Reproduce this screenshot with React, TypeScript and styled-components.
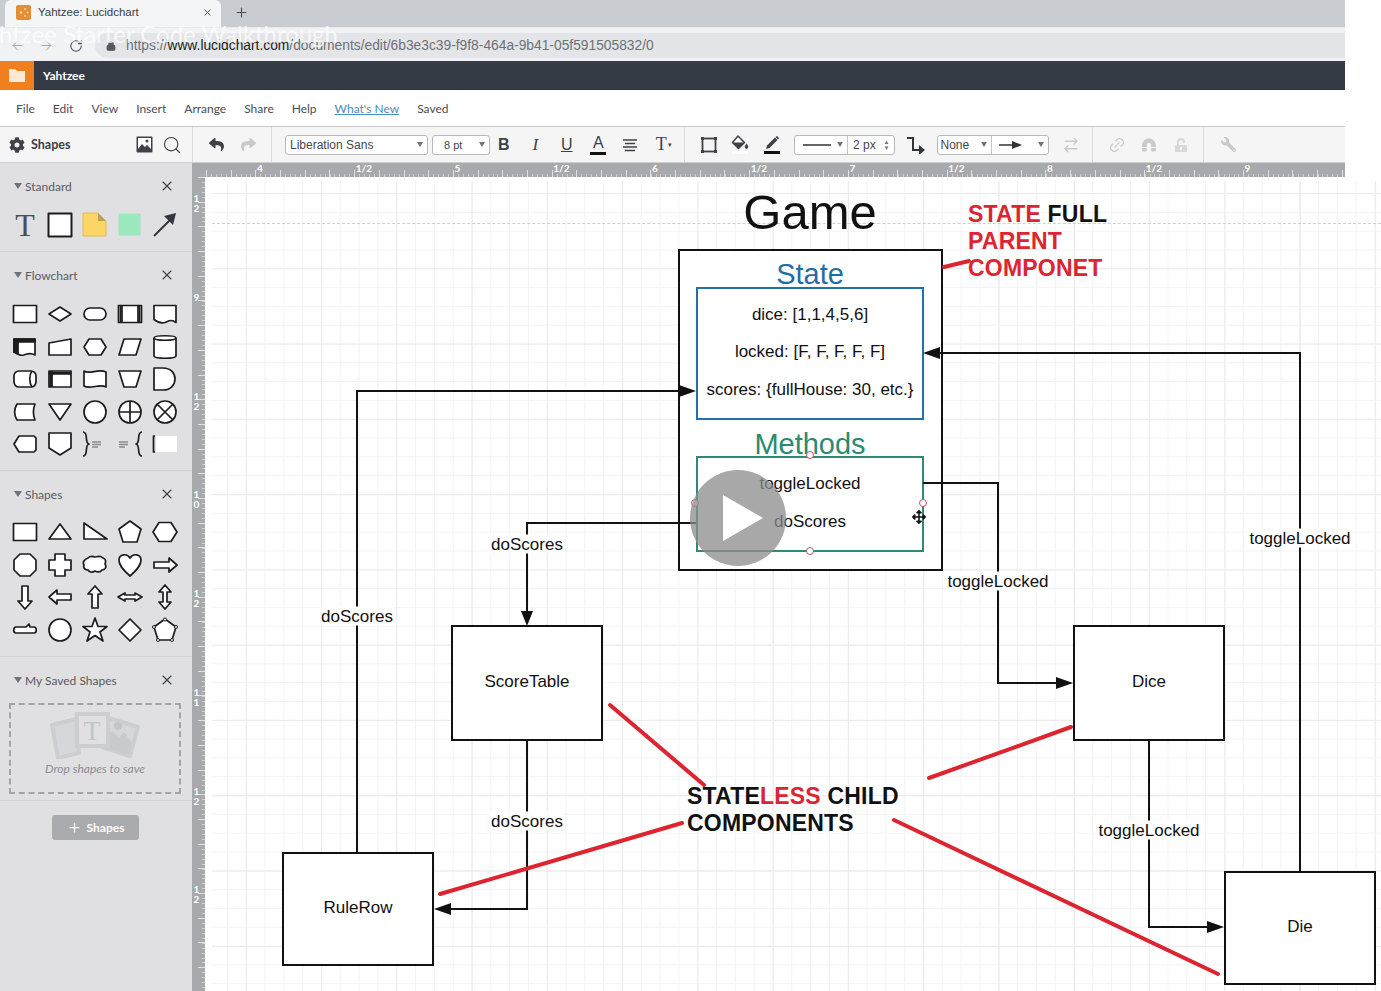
import React from "react";
import styled, { createGlobalStyle } from "styled-components";
import { FaCog, FaReply, FaShare, FaMagnet, FaUnlockAlt, FaWrench, FaArrowsAlt } from "react-icons/fa";
import { Search, Link2, ArrowRightLeft, RotateCw, ArrowLeft, ArrowRight, Lock, X, Plus } from "lucide-react";

const Global = createGlobalStyle`
  html, body { margin: 0; padding: 0; background: #fff; }
  body { font-family: Lato, "Noto Sans", "Liberation Sans", sans-serif; }
  * { box-sizing: border-box; }
`;

const Page = styled.div`
  position: relative; width: 1381px; height: 991px; overflow: hidden; background: #fff;
  display: flex; flex-direction: column;
`;
const Chrome = styled.header`width: 1345px; flex: none; display: flex; flex-direction: column;`;
const TabStrip = styled.div`height: 27px; background: #c9ccd0; display: flex; align-items: flex-start; padding-left: 5px;`;
const Tab = styled.div`
  width: 216px; height: 27px; background: #f4f5f6; border-radius: 6px 6px 0 0;
  display: flex; align-items: center; padding: 0 8px 3px 11px; color: #3a3d42; font-size: 11.5px;
`;
const Favicon = styled.svg`width: 15px; height: 15px; margin-right: 7px; flex: none; display: block;`;
const TabTitle = styled.span`flex: 1; font-family: "Liberation Sans", sans-serif;`;
const NewTab = styled.span`color: #4b4e52; margin: 5px 0 0 13px; display: flex;`;
const AddressRow = styled.div`
  height: 34px; background: #f1f2f3; display: flex; align-items: center; padding: 5px 0 3px 3px; border-top: 1px solid #e8e9eb; color: #8f9296;
`;
const NavIcon = styled.span<{ $dark?: boolean }>`width: 29px; display: flex; justify-content: center; color: ${p => (p.$dark ? "#55585c" : "#a6a9ac")};`;
const UrlPill = styled.div`
  flex: 1; height: 25px; margin-left: 5px; background: #e3e5e8; border-radius: 13px 0 0 13px;
  display: flex; align-items: center; padding-left: 11px; font: 13.8px "Liberation Sans", sans-serif; color: #6e7276;
`;
const UrlHost = styled.span`color: #222;`;
const LockWrap = styled.span`display: flex; margin-right: 10px; color: #55585c;`;
const BrandBar = styled.div`height: 29px; background: #353b45; display: flex; align-items: center; color: #fff; font-size: 12px; font-weight: 700; border-bottom: 1px solid #2c3038;`;
const FolderBox = styled.div`width: 34px; height: 29px; background: #f0801f; display: flex; align-items: center; justify-content: center; margin-right: 9px;`;
const MenuBar = styled.nav`height: 37px; background: #fff; display: flex; align-items: center; padding-left: 16px; gap: 18px; font-size: 12px; color: #4a4d52; border-bottom: 1px solid #c9c9c9;`;
const NewsLink = styled.a`color: #4a8cb9; text-decoration: underline;`;
const Toolbar = styled.div`height: 36px; background: #f5f5f6; display: flex; align-items: center; border-bottom: 1px solid #cfcfcf; color: #3e4248;`;
const ToolSection = styled.div<{ $w: number; $pad?: number }>`
  width: ${p => p.$w}px; height: 100%; flex: none; display: flex; align-items: center; border-right: 1px solid #dcdcdc; padding-left: ${p => p.$pad ?? 0}px;
`;
const ShapesTitle = styled.strong`font-size: 12.5px; font-weight: 700; margin-left: 6px; flex: 1; color: #3c4046;`;
const ToolBtn = styled.span<{ $w?: number; $muted?: boolean; $serif?: boolean; $ml?: number }>`
  width: ${p => p.$w ?? 31.5}px; flex: none; display: flex; flex-direction: column; align-items: center; justify-content: center; margin-left: ${p => p.$ml ?? 0}px;
  color: ${p => (p.$muted ? "#c9cacc" : "#3e4248")}; font: ${p => (p.$serif ? "17px" : "16px")} ${p => (p.$serif ? '"Liberation Serif", serif' : '"Liberation Sans", sans-serif')};
`;
const ColorBar = styled.i<{ $c: string }>`display: block; width: 16px; height: 3px; margin-top: 1px; background: ${p => p.$c};`;
const SelectBox = styled.div<{ $w: number; $ml?: number }>`
  width: ${p => p.$w}px; height: 20px; margin-left: ${p => p.$ml ?? 0}px; flex: none; background: #fff; border: 1px solid #b9b9bb; border-radius: 3px;
  display: flex; align-items: center; justify-content: space-between; padding: 0 4px; font: 12px "Liberation Sans", sans-serif; color: #45484d;
`;
const SelectSplit = styled.span<{ $w: number; $rule?: boolean }>`
  width: ${p => p.$w}px; height: 100%; display: flex; align-items: center; justify-content: space-between; padding-right: 4px; padding-left: 3px;
  border-right: ${p => (p.$rule ? "1px solid #c4c4c6" : "none")};
`;
const Caret = styled.i`width: 0; height: 0; border: 3.5px solid transparent; border-top: 5px solid #70737a; border-bottom: 0; display: block;`;
const Stepper = styled.i`font-size: 6px; line-height: 6px; font-style: normal; color: #70737a; text-align: center;`;

const Workspace = styled.div`flex: 1; display: flex; min-height: 0;`;
const Sidebar = styled.aside`width: 192px; flex: none; background: #e0e0e3; display: flex; flex-direction: column; color: #55585e;`;
const Panel = styled.section<{ $h: number }>`height: ${p => p.$h}px; flex: none; border-bottom: 1px solid #d2d2d5; padding-top: 12px;`;
const PanelHead = styled.div`display: flex; align-items: center; height: 22px; padding: 0 17px 0 14px; font-size: 12px; color: #585b61;`;
const PanelName = styled.span`flex: 1; margin-left: 3px;`;
const ShapeGrid = styled.div<{ $top: number; $row: number }>`
  display: grid; grid-template-columns: repeat(5, 35px); grid-auto-rows: ${p => p.$row}px; padding: ${p => p.$top}px 0 0 7.5px; justify-items: center; align-items: center;
`;
const ShapeIcon = styled.svg`
  width: 26px; height: 26px; display: block; fill: #fff; stroke: #1c1c1c; stroke-width: 1.7; stroke-linejoin: round;
`;
const SavedDrop = styled.div`
  margin: 12px 11px 0 9px; height: 91px; border: 2px dashed #a3a4a8; display: flex; flex-direction: column; align-items: center; padding-top: 6px;
`;
const DropText = styled.em`font-size: 12px; color: #8b8d92; margin-top: 2px;`;
const AddRow = styled.div`display: flex; justify-content: center; padding: 14px 0 0 0; margin-left: -1px;`;
const AddBtn = styled.button`
  width: 87px; height: 25px; background: #a9abaf; color: #fff; border: 0; border-radius: 3px; font: 700 12px Lato, sans-serif;
  display: flex; align-items: center; justify-content: center; gap: 5px;
`;

const Main = styled.div`flex: 1; display: flex; flex-direction: column; min-width: 0;`;
const rulerBase = `
  background-color: #a7a9ad; color: #fff; font: 700 10px Lato, sans-serif;
`;
const TopRuler = styled.div`
  ${rulerBase}
  height: 14px; width: 1153px; flex: none; display: flex; padding-left: 65px; overflow: hidden;
  background-image:
    repeating-linear-gradient(90deg, #dfe0e2 0 1px, transparent 1px 24.69px),
    repeating-linear-gradient(90deg, #cfd0d3 0 1px, transparent 1px 4.94px);
  background-size: 100% 7px, 100% 3px;
  background-position: 14px 100%, 14px 100%;
  background-repeat: no-repeat;
`;
const TopMark = styled.span`width: 98.75px; flex: none; line-height: 10px;`;
const BodyRow = styled.div`flex: 1; display: flex; min-height: 0;`;
const LeftRuler = styled.div`
  ${rulerBase}
  width: 13px; flex: none; display: flex; flex-direction: column; padding-top: 16px; overflow: hidden; align-items: flex-start; padding-left: 1px;
  background-image:
    repeating-linear-gradient(180deg, #dfe0e2 0 1px, transparent 1px 24.69px),
    repeating-linear-gradient(180deg, #cfd0d3 0 1px, transparent 1px 4.94px);
  background-size: 7px 100%, 3px 100%;
  background-position: 100% 0, 100% 0;
  background-repeat: no-repeat;
`;
const LeftMark = styled.span`height: 98.75px; flex: none; width: 7px; line-height: 10px; text-align: center; display: flex; flex-direction: column;`;
const Canvas = styled.main`
  position: relative; flex: 1; background-color: #fff; padding: 4px 0 0 7px; background-clip: content-box; background-origin: content-box;
  background-image:
    linear-gradient(#ebebeb 1px, transparent 1px),
    linear-gradient(90deg, #ebebeb 1px, transparent 1px),
    linear-gradient(#f3f3f3 1px, transparent 1px),
    linear-gradient(90deg, #f3f3f3 1px, transparent 1px);
  background-size: 75.3px 75.3px, 75.3px 75.3px, 18.82px 18.82px, 18.82px 18.82px;
  background-position: 0 12px, 33.7px 0, 0 12px, 14.9px 0;
  font: 17px "Liberation Sans", sans-serif; color: #111;
`;
const PageGuide = styled.div`position: absolute; left: 7px; right: 0; top: 46px; border-top: 1px dashed #cfcfcf;`;
const Wires = styled.svg`position: absolute; left: 0; top: 0; width: 1176px; height: 814px; pointer-events: none;`;
const NodeBox = styled.div<{ $x: number; $y: number; $w: number; $h: number; $c?: string }>`
  position: absolute; left: ${p => p.$x - 205}px; top: ${p => p.$y - 177}px; width: ${p => p.$w}px; height: ${p => p.$h}px;
  border: 2px solid ${p => p.$c ?? "#111"}; background: #fff; display: flex; align-items: center; justify-content: center; padding: 0 0 3px 0;
`;
const CanvasText = styled.div<{ $cx: number; $y: number; $size?: number; $c?: string }>`
  position: absolute; left: ${p => p.$cx - 205 - 150}px; top: ${p => p.$y - 177 - 30}px; width: 300px; height: 60px;
  display: flex; align-items: center; justify-content: center; font-size: ${p => p.$size ?? 17}px; color: ${p => p.$c ?? "#111"};
`;
const EdgeLabel = styled.span<{ $cx: number; $y: number }>`
  position: absolute; left: ${p => p.$cx - 205}px; top: ${p => p.$y - 177}px; transform: translate(-50%, -50%); background: #fff; padding: 0 1px; line-height: 19px; white-space: nowrap;
`;
const Note = styled.div<{ $x: number; $y: number }>`
  position: absolute; left: ${p => p.$x - 205}px; top: ${p => p.$y - 177}px; font-size: 23px; font-weight: 700; line-height: 27px; color: #111; white-space: nowrap; letter-spacing: 0.2px;
`;
const Red = styled.span`color: #dc2530;`;
const Handle = styled.i<{ $x: number; $y: number }>`
  position: absolute; left: ${p => p.$x - 205 - 4}px; top: ${p => p.$y - 177 - 4}px; width: 8px; height: 8px; border-radius: 50%; background: #fff; border: 1px solid #b4566c;
`;
const PlayCircle = styled.div`
  position: absolute; left: ${690 - 205}px; top: ${470 - 177}px; width: 96px; height: 96px; border-radius: 50%; background: rgba(140, 140, 140, 0.76);
  display: flex; align-items: center; justify-content: center;
`;
const MoveCursor = styled.span`position: absolute; left: ${912 - 205}px; top: ${510 - 177}px; display: flex; color: #111;`;
const GhostTitle = styled.div`
  position: absolute; left: -1px; top: 19px; font: 400 24px Lato, sans-serif; color: rgba(255, 255, 255, 0.72); white-space: nowrap; pointer-events: none;
`;

const S = (c: React.ReactNode, k: string) => <ShapeIcon key={k} viewBox="0 0 26 26">{c}</ShapeIcon>;
const flowchart: React.ReactNode[] = [
  <rect x="1.5" y="4.5" width="23" height="17" />,
  <path d="M2 13 13 6l11 7-11 7z" />,
  <rect x="2" y="7" width="22" height="12" rx="6" />,
  <><rect x="1.5" y="4.5" width="23" height="17" /><path d="M3.500 4.500v17M22.500 4.500v17" /><path d="M5 4.500v17M21 4.500v17" /></>,
  <path d="M2 4.5h22v17c-5-4-8-1-11 0s-7 0-11-3z" />,
  <><path d="M2 5h21v16c-5-3-8-1-11 0s-7-1-10-3z" /><path d="M2 5h21v3H6v11l-4-1z" fill="#1c1c1c" /></>,
  <path d="M2 9 24 5v16H2z" />,
  <path d="M7 5h12l5 8-5 8H7l-5-8z" />,
  <path d="M7 5h17l-5 16H2z" />,
  <><path d="M2 4c0-3 22-3 22 0v18c0 3-22 3-22 0z" /><path d="M2 4c0 3 22 3 22 0" /></>,
  <><rect x="2" y="5" width="22" height="16" rx="5" /><path d="M20 5c-3 4-3 12 0 16" /></>,
  <><rect x="2" y="5" width="22" height="16" /><path d="M2 8h22M2 6.500h22M5 5v16M3.500 5v16" /></>,
  <path d="M2 5c6 4 14-3 22 1v15c-7-4-15 3-22-1z" />,
  <path d="M2 5h22l-5 16H7z" />,
  <path d="M2 2h9c16 0 16 22 0 22H2z" />,
  <path d="M4 5h18c-2 5-2 11 0 16H4c-3-5-3-11 0-16z" transform="translate(1 0)" />,
  <path d="M2 5h22L13 21z" />,
  <circle cx="13" cy="13" r="11" />,
  <><circle cx="13" cy="13" r="11" /><path d="M13 2v22M2 13h22" /></>,
  <><circle cx="13" cy="13" r="11" /><path d="M5 5l16 16M21 5 5 21" /></>,
  <path d="M7 5h15l2 2v12l-2 2H7l-5-8z" />,
  <path d="M2 2h22v15l-11 7L2 17z" />,
  <g fill="none"><path d="M1 1c6 0 1 11 6 12-5 1 0 12-6 12" /><path d="M10 11h9M10 13.500h9M10 16h6" stroke="#8a8a8a" /></g>,
  <g fill="none"><path d="M25 1c-6 0-1 11-6 12 5 1 0 12 6 12" /><path d="M2 11h9M2 13.500h9M2 16h6" stroke="#8a8a8a" /></g>,
  <><path d="M3 5H1.500v16H3" fill="none" /><rect x="4" y="5" width="21" height="16" fill="#fff" stroke="none" /></>,
];
const basics: React.ReactNode[] = [
  <rect x="1.500" y="4.500" width="23" height="17" />,
  <path d="M13 5l11 15H2z" />,
  <path d="M2 4v16h23z" />,
  <path d="M13 2l11 8-4 13H6L2 10z" />,
  <path d="M7 3.500h12l6 9.500-6 9.500H7L1 13z" />,
  <path d="M8 2h10l6 6v10l-6 6H8l-6-6V8z" />,
  <path d="M8 2h10v6h6v10h-6v6H8v-6H2V8h6z" />,
  <path d="M6 6c3-3 5-1 7-1s5-2 8 1c3 1 3 4 2 6 2 3 0 6-3 6-2 3-5 2-7 1-3 2-6 1-7-1-3 0-5-2-4-5-2-3 1-6 4-7z" />,
  <path d="M13 24C5 17 2 13 2 8c0-6 8-7 11-2 3-5 11-4 11 2 0 5-3 9-11 16z" />,
  <path d="M2 10h15V6l8 7-8 7v-4H2z" />,
  <path d="M10 2h6v15h4l-7 8-7-8h4z" />,
  <path d="M24 10H10V6l-8 7 8 7v-4h14z" />,
  <path d="M10 24V10H6l7-8 7 8h-4v14z" />,
  <path d="M8 9v2h10V9l7 4-7 4v-2H8v2l-7-4z" />,
  <path d="M11 8H7l6-7 6 7h-4v10h4l-6 7-6-7h4z" />,
  <path d="M4 10h10l3-3 1 3h4c3 0 3 6 0 6H4c-3 0-3-6 0-6z" />,
  <circle cx="13" cy="13" r="11" />,
  <path d="M13 1l3 8.500h9L18 15l3 9-8-5.500L5 24l3-9-7-5.500h9z" />,
  <path d="M13 2l11 11-11 11L2 13z" />,
  <><path d="M13 2l11 8-4 13H6L2 10z" /><g strokeWidth="1"><circle cx="13" cy="2.500" r="1.500" /><circle cx="24" cy="10" r="1.500" /><circle cx="20" cy="23" r="1.500" /><circle cx="6" cy="23" r="1.500" /><circle cx="2" cy="10" r="1.500" /></g></>,
];

const TriangleMark = () => <svg width="8" height="8" viewBox="0 0 8 8"><path d="M0 1h8L4 7z" fill="#6f7278" /></svg>;
const Close = () => <X size={16} strokeWidth={1.6} color="#3d4046" />;
const Head = ({ name }: { name: string }) => (
  <PanelHead><TriangleMark /><PanelName>{name}</PanelName><Close /></PanelHead>
);

const StandardIcons = () => (
  <>
    <ToolBtn $serif style={{ fontSize: 32, color: "#4a4d55", lineHeight: "30px" }}>T</ToolBtn>
    <ShapeIcon viewBox="0 0 26 26" style={{ strokeWidth: 2 }}><rect x="1.500" y="1.500" width="23" height="23" /></ShapeIcon>
    <ShapeIcon viewBox="0 0 26 26" style={{ fill: "#fbd665", stroke: "#e3bb58", strokeWidth: 1 }}><path d="M1 1h15l8 8v15H1z" /><path d="M16 1v8h8z" fill="#b8a15e" stroke="none" /></ShapeIcon>
    <ShapeIcon viewBox="0 0 26 26" style={{ stroke: "none", fill: "#9be8bd" }}><rect x="1.500" y="1.500" width="22" height="22" /></ShapeIcon>
    <ShapeIcon viewBox="0 0 26 26" style={{ stroke: "#33363d", strokeWidth: 2 }}><path d="M2 24 19 7" /><path d="M24 1l-3 12-9-9z" fill="#33363d" stroke="none" /></ShapeIcon>
  </>
);

const SavedArt = () => (
  <svg width="92" height="48" viewBox="0 0 92 48" style={{ display: "block" }}>
    <g fill="none" stroke="#ccced1" strokeWidth="4" strokeLinejoin="round">
      <path d="M3 14l24-6 3 34-21 5z" fill="#d6d7da" />
      <path d="M60 7l29 9-8 29-28-9z" fill="#d6d7da" />
    </g>
    <path d="M51 36l12-16 7 6 5-5 8 11-3 12z" fill="#c9cacd" />
    <circle cx="69" cy="15" r="4" fill="#c4c5c8" />
    <rect x="28" y="3" width="31" height="32" fill="#e0e0e3" stroke="#ccced1" strokeWidth="4" />
    <text x="43" y="29" textAnchor="middle" fontFamily="Liberation Serif, serif" fontSize="28" fill="#c4c5c9">T</text>
  </svg>
);

const H = 177;
const arrow = (x: number, y: number, d: "r" | "l" | "d") => {
  const p = d === "r" ? `${x},${y} ${x - 17},${y - 6} ${x - 17},${y + 6}` : d === "l" ? `${x},${y} ${x + 17},${y - 6} ${x + 17},${y + 6}` : `${x},${y} ${x - 6},${y - 15} ${x + 6},${y - 15}`;
  return <polygon points={p} fill="#111" />;
};

export default function App() {
  return (
    <Page>
      <Global />
      <Chrome>
        <TabStrip>
          <Tab>
            <Favicon viewBox="0 0 15 15">
              <rect width="15" height="15" rx="2" fill="#e58d35" />
              <g fill="#f7d9a8"><circle cx="5" cy="7.500" r="1.300" /><circle cx="9" cy="4" r="1" /><circle cx="9" cy="11" r="1" /><circle cx="11.500" cy="7.500" r="1" /></g>
            </Favicon>
            <TabTitle>Yahtzee: Lucidchart</TabTitle>
            <X size={11} strokeWidth={2} color="#44474b" />
          </Tab>
          <NewTab><Plus size={15} strokeWidth={1.8} /></NewTab>
        </TabStrip>
        <AddressRow>
          <NavIcon><ArrowLeft size={15} strokeWidth={1.6} /></NavIcon>
          <NavIcon><ArrowRight size={15} strokeWidth={1.6} /></NavIcon>
          <NavIcon $dark><RotateCw size={14} strokeWidth={2} /></NavIcon>
          <UrlPill>
            <LockWrap><Lock size={10} strokeWidth={3} fill="currentColor" /></LockWrap>
            https://<UrlHost>www.lucidchart.com</UrlHost>/documents/edit/6b3e3c39-f9f8-464a-9b41-05f591505832/0
          </UrlPill>
        </AddressRow>
        <BrandBar>
          <FolderBox>
            <svg width="18" height="15" viewBox="0 0 18 15"><path d="M1 1h6l2 2h8v11H1z" fill="#fbe9d3" /></svg>
          </FolderBox>
          Yahtzee
        </BrandBar>
        <MenuBar>
          <span>File</span><span>Edit</span><span>View</span><span>Insert</span><span>Arrange</span><span>Share</span><span>Help</span>
          <NewsLink>What's New</NewsLink><span>Saved</span>
        </MenuBar>
        <Toolbar>
          <ToolSection $w={193} $pad={9}>
            <FaCog size={16} />
            <ShapesTitle>Shapes</ShapesTitle>
            <ToolBtn $w={28}>
              <svg width="17" height="17" viewBox="0 0 17 17"><rect x=".5" y=".5" width="16" height="16" rx="1" fill="#3e4248" /><rect x="2" y="2" width="13" height="11" fill="#fff" /><path d="M2 13l4-5 3 3 2-2 4 4z" fill="#3e4248" /><circle cx="11" cy="5" r="1.500" fill="#3e4248" /></svg>
            </ToolBtn>
            <ToolBtn $w={28} style={{ marginRight: 6 }}><Search size={20} strokeWidth={1.4} /></ToolBtn>
          </ToolSection>
          <ToolSection $w={79} $pad={8}>
            <ToolBtn><FaReply size={15} /></ToolBtn>
            <ToolBtn $muted><FaShare size={15} /></ToolBtn>
          </ToolSection>
          <ToolSection $w={413} $pad={13}>
            <SelectBox $w={143}>Liberation Sans<Caret /></SelectBox>
            <SelectBox $w={58} $ml={4} style={{ paddingLeft: 11, fontSize: 11 }}>8 pt<Caret /></SelectBox>
            <ToolBtn $ml={-2} style={{ fontWeight: 700 }}>B</ToolBtn>
            <ToolBtn $serif style={{ fontStyle: "italic" }}>I</ToolBtn>
            <ToolBtn style={{ textDecoration: "underline" }}>U</ToolBtn>
            <ToolBtn style={{ lineHeight: "17px" }}>A<ColorBar $c="#111" /></ToolBtn>
            <ToolBtn>
              <svg width="16" height="14" viewBox="0 0 16 14"><path d="M1 2h14M3 5.500h10M1 9h14M3 12.500h10" stroke="#3e4248" strokeWidth="1.500" /></svg>
            </ToolBtn>
            <ToolBtn $serif style={{ fontSize: 18 }}>T<small style={{ fontSize: 7, position: "absolute", marginLeft: 18 }}>▾</small></ToolBtn>
          </ToolSection>
          <ToolSection $w={408} $pad={8}>
            <ToolBtn>
              <svg width="18" height="18" viewBox="0 0 18 18"><rect x="2.500" y="2.500" width="13" height="13" fill="none" stroke="#3e4248" strokeWidth="1.800" /><g fill="#3e4248"><rect x="1" y="1" width="3" height="3" /><rect x="14" y="1" width="3" height="3" /><rect x="1" y="14" width="3" height="3" /><rect x="14" y="14" width="3" height="3" /></g></svg>
            </ToolBtn>
            <ToolBtn>
              <svg width="18" height="15" viewBox="0 0 18 15">
                <path d="M7 1 13.500 7.500 7.500 13.500 1.500 7.500z" fill="#fff" stroke="#3e4248" strokeWidth="1.500" strokeLinejoin="round" />
                <path d="M1.500 7.500h12l-6 6z" fill="#3e4248" />
                <path d="M15.500 8.500c1 1.500 1.800 2.500 1.800 3.400a1.800 1.800 0 0 1-3.600 0c0-.9.800-1.900 1.800-3.400z" fill="#3e4248" />
              </svg>
              <ColorBar $c="#fff" />
            </ToolBtn>
            <ToolBtn>
              <svg width="16" height="14" viewBox="0 0 16 14">
                <path d="M2 13 3 9.500 11 1.500l2.500 2.500-8 8z" fill="#3e4248" />
                <path d="M11.500 1 13 0l2 2-1 1.500z" fill="#3e4248" />
              </svg>
              <ColorBar $c="#111" />
            </ToolBtn>
            <SelectBox $w={101} $ml={6} style={{ padding: 0 }}>
              <SelectSplit $w={54} $rule>
                <svg width="30" height="4" viewBox="0 0 30 4" style={{ marginLeft: 5 }}><path d="M0 2h28" stroke="#333" strokeWidth="1.500" /></svg><Caret />
              </SelectSplit>
              <SelectSplit $w={46} style={{ paddingLeft: 5 }}>2 px<Stepper>▲<br />▼</Stepper></SelectSplit>
            </SelectBox>
            <ToolBtn $w={42}>
              <svg width="20" height="18" viewBox="0 0 20 18"><path d="M1 2h6v12h9" fill="none" stroke="#33363c" strokeWidth="2" /><path d="M19 14l-6-5v10z" fill="#33363c" /></svg>
            </ToolBtn>
            <SelectBox $w={112} style={{ padding: 0 }}>
              <SelectSplit $w={55} $rule>None<Caret /></SelectSplit>
              <SelectSplit $w={56}>
                <svg width="24" height="10" viewBox="0 0 24 10" style={{ marginLeft: 4 }}><path d="M0 5h14" stroke="#333" strokeWidth="1.500" /><path d="M23 5l-10-4v8z" fill="#333" /></svg><Caret />
              </SelectSplit>
            </SelectBox>
            <ToolBtn $w={44} $muted><ArrowRightLeft size={18} strokeWidth={1.7} /></ToolBtn>
          </ToolSection>
          <ToolSection $w={111} $pad={8}>
            <ToolBtn $w={32} $muted><Link2 size={18} strokeWidth={1.8} style={{ transform: "rotate(-45deg)" }} /></ToolBtn>
            <ToolBtn $w={32} $muted><FaMagnet size={14} style={{ transform: "rotate(180deg)" }} /></ToolBtn>
            <ToolBtn $w={32} $muted style={{ opacity: 0.65 }}><FaUnlockAlt size={14} /></ToolBtn>
          </ToolSection>
          <ToolBtn $w={48} $muted><FaWrench size={15} style={{ transform: "scaleX(-1)" }} /></ToolBtn>
        </Toolbar>
      </Chrome>
      <Workspace>
        <Sidebar>
          <Panel $h={89}>
            <Head name="Standard" />
            <ShapeGrid $top={12} $row={32}><StandardIcons /></ShapeGrid>
          </Panel>
          <Panel $h={219}>
            <Head name="Flowchart" />
            <ShapeGrid $top={12} $row={32.500}>{flowchart.map((c, i) => S(c, `f${i}`))}</ShapeGrid>
          </Panel>
          <Panel $h={186}>
            <Head name="Shapes" />
            <ShapeGrid $top={11} $row={32.500}>{basics.map((c, i) => S(c, `b${i}`))}</ShapeGrid>
          </Panel>
          <Panel $h={144}>
            <Head name="My Saved Shapes" />
            <SavedDrop><SavedArt /><DropText>Drop shapes to save</DropText></SavedDrop>
          </Panel>
          <AddRow><AddBtn><Plus size={15} strokeWidth={2} />Shapes</AddBtn></AddRow>
        </Sidebar>
        <Main>
          <TopRuler>
            {["4", "1/2", "5", "1/2", "6", "1/2", "7", "1/2", "8", "1/2", "9"].map((t, i) => <TopMark key={i}>{t}</TopMark>)}
          </TopRuler>
          <BodyRow>
            <LeftRuler>
              {[["1", "2"], ["9"], ["1", "2"], ["1", "0"], ["1", "2"], ["1", "1"], ["1", "2"], ["1", "2"]].map((t, i) => (
                <LeftMark key={i}>{t.map((d, j) => <span key={j}>{d}</span>)}</LeftMark>
              ))}
            </LeftRuler>
            <Canvas>
              <PageGuide />
              <NodeBox $x={678} $y={249} $w={265} $h={322} />
              <NodeBox $x={696} $y={287} $w={228} $h={133} $c="#2470a8" />
              <NodeBox $x={696} $y={456} $w={228} $h={96} $c="#2f8a75" />
              <NodeBox $x={451} $y={625} $w={152} $h={116}>ScoreTable</NodeBox>
              <NodeBox $x={1073} $y={625} $w={152} $h={116}>Dice</NodeBox>
              <NodeBox $x={282} $y={852} $w={152} $h={114}>RuleRow</NodeBox>
              <NodeBox $x={1224} $y={871} $w={152} $h={114}>Die</NodeBox>
              <Wires viewBox={`205 ${H} 1176 814`}>
                <g fill="none" stroke="#111" strokeWidth="2">
                  <path d="M357 852V391H680" />
                  <path d="M696 523H527V612" />
                  <path d="M923 483H998V683H1058" />
                  <path d="M1300 871V353H940" />
                  <path d="M1149 740V927H1208" />
                  <path d="M527 740V909H450" />
                </g>
                {arrow(696, 391, "r")}
                {arrow(527, 626, "d")}
                {arrow(1073, 683, "r")}
                {arrow(923, 353, "l")}
                {arrow(1224, 927, "r")}
                {arrow(434, 909, "l")}
                <g stroke="#dc2530" strokeWidth="4" strokeLinecap="round">
                  <path d="M944 267 969 261" />
                  <path d="M610 705 704 785" />
                  <path d="M1071 727 929 778" />
                  <path d="M682 823 440 894" />
                  <path d="M894 820 1218 974" />
                </g>
              </Wires>
              <CanvasText $cx={810} $y={212} $size={49}>Game</CanvasText>
              <CanvasText $cx={810} $y={274} $size={29} $c="#1f6ea5">State</CanvasText>
              <CanvasText $cx={810} $y={315}>dice: [1,1,4,5,6]</CanvasText>
              <CanvasText $cx={810} $y={352}>locked: [F, F, F, F, F]</CanvasText>
              <CanvasText $cx={810} $y={390}>scores: {"{"}fullHouse: 30, etc.{"}"}</CanvasText>
              <CanvasText $cx={810} $y={444} $size={29} $c="#2b8a72">Methods</CanvasText>
              <CanvasText $cx={810} $y={484}>toggleLocked</CanvasText>
              <CanvasText $cx={810} $y={522}>doScores</CanvasText>
              <EdgeLabel $cx={357} $y={616}>doScores</EdgeLabel>
              <EdgeLabel $cx={527} $y={544}>doScores</EdgeLabel>
              <EdgeLabel $cx={527} $y={821}>doScores</EdgeLabel>
              <EdgeLabel $cx={998} $y={581}>toggleLocked</EdgeLabel>
              <EdgeLabel $cx={1300} $y={538}>toggleLocked</EdgeLabel>
              <EdgeLabel $cx={1149} $y={830}>toggleLocked</EdgeLabel>
              <Note $x={968} $y={201}><Red>STATE</Red> FULL<br /><Red>PARENT</Red><br /><Red>COMPONET</Red></Note>
              <Note $x={687} $y={783}>STATE<Red>LESS</Red> CHILD<br />COMPONENTS</Note>
              <Handle $x={810} $y={455} />
              <Handle $x={695} $y={503} />
              <Handle $x={923} $y={503} />
              <Handle $x={810} $y={551} />
              <PlayCircle>
                <svg width="42" height="48" viewBox="0 0 42 48" style={{ marginLeft: 10 }}><path d="M1 1l40 23L1 47z" fill="#fff" /></svg>
              </PlayCircle>
              <MoveCursor><FaArrowsAlt size={14} /></MoveCursor>
            </Canvas>
          </BodyRow>
        </Main>
      </Workspace>
      <GhostTitle>htzee Starter Code Walkthrough</GhostTitle>
    </Page>
  );
}
